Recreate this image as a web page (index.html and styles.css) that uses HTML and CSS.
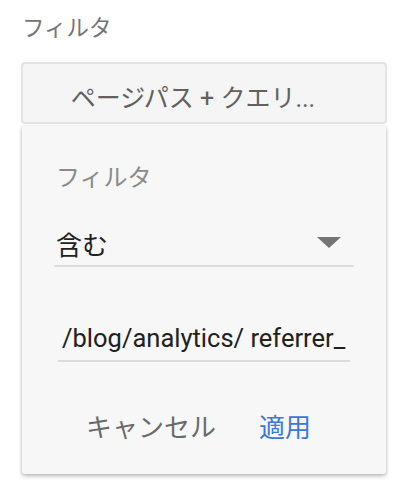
FILE: index.html
```html
<!DOCTYPE html>
<html lang="ja">
<head>
<meta charset="utf-8">
<link rel="stylesheet" href="styles.css">
</head>
<body>
<div class="page">
  <div class="title">フィルタ</div>
  <div class="chip">ページパス + クエリ...</div>
  <div class="panel">
    <div class="label">フィルタ</div>
    <div class="select">
      <span class="select-text">含む</span>
      <svg class="arrow" width="24" height="11" viewBox="0 0 24 11"><path d="M0 0 L24 0 L12 11 Z" fill="#757575"/></svg>
    </div>
    <div class="input">/blog/analytics/ referrer_</div>
    <div class="actions">
      <span class="btn cancel">キャンセル</span>
      <span class="btn apply">適用</span>
    </div>
  </div>
</div>
</body>
</html>
```
FILE: styles.css
```css
html, body {
  margin: 0;
  padding: 0;
  background: #ffffff;
}
body {
  font-family: Roboto, "Noto Sans CJK JP", sans-serif;
}
.page {
  width: 414px;
  height: 490px;
  overflow: hidden;
  padding-top: 11px;
  box-sizing: border-box;
}
.title {
  margin-left: 22px;
  font-size: 22.5px;
  line-height: 34px;
  color: #757575;
}
.chip {
  margin: 17px 0 0 21px;
  width: 366px;
  height: 62px;
  box-sizing: border-box;
  border: 2px solid #e3e3e3;
  border-radius: 4px;
  background: #f5f5f5;
  color: #616161;
  font-size: 25px;
  display: flex;
  align-items: center;
  justify-content: center;
  padding-top: 6px;
  padding-right: 22px;
}
.panel {
  margin: 2px 0 0 22px;
  width: 364px;
  height: 348px;
  box-sizing: border-box;
  background: #f7f7f7;
  border-radius: 0 0 3px 3px;
  box-shadow: 0 2px 4px rgba(0,0,0,0.28), 0 0 2px rgba(0,0,0,0.1);
  padding: 34px 32px 0 32px;
  display: flex;
  flex-direction: column;
}
.label {
  font-size: 24px;
  line-height: 36px;
  color: #8a8a8a;
  margin-left: 2px;
}
.select {
  margin-top: 25px;
  height: 44px;
  border-bottom: 2px solid #dcdcdc;
  display: flex;
  align-items: center;
  justify-content: space-between;
  box-sizing: content-box;
}
.select-text {
  font-size: 26px;
  color: #212121;
  margin-left: 2px;
}
.arrow {
  margin-right: 13px;
  margin-top: -2px;
}
.input {
  margin: 49px 4px 0 4px;
  padding-left: 4px;
  height: 44px;
  line-height: 44px;
  border-bottom: 2px solid #dcdcdc;
  font-size: 25.5px;
  color: #212121;
  white-space: nowrap;
  overflow: hidden;
}
.actions {
  margin-top: 47px;
  display: flex;
  gap: 43px;
  padding-left: 32px;
}
.btn {
  font-size: 26px;
  line-height: 38px;
}
.cancel {
  color: #6a6a6a;
}
.apply {
  color: #3a78d8;
}
```
